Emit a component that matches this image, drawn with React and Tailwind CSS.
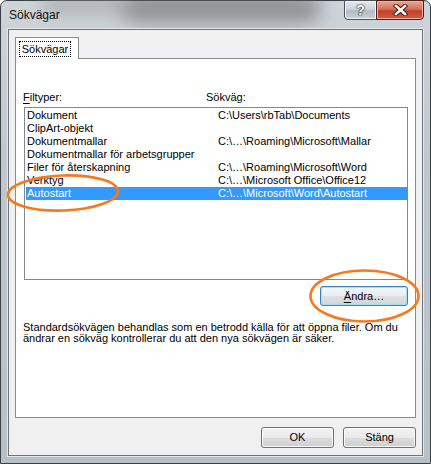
import React from "react";

const rows = [
  { type: "Dokument", path: "C:\\Users\\rbTab\\Documents" },
  { type: "ClipArt-objekt", path: "" },
  { type: "Dokumentmallar", path: "C:\\…\\Roaming\\Microsoft\\Mallar" },
  { type: "Dokumentmallar för arbetsgrupper", path: "" },
  { type: "Filer för återskapning", path: "C:\\…\\Roaming\\Microsoft\\Word" },
  { type: "Verktyg", path: "C:\\…\\Microsoft Office\\Office12" },
  { type: "Autostart", path: "C:\\…\\Microsoft\\Word\\Autostart", selected: true },
];

export default function App() {
  return (
    <div className="relative w-[431px] h-[464px] overflow-hidden bg-white font-['Liberation_Sans',Arial,sans-serif] text-[11px] text-black">
      <div className="relative flex h-full flex-col rounded-t-[7px] border border-[#3b4046] bg-[linear-gradient(180deg,#cfd4d9_0%,#c0c7ce_35%,#b7bfc7_100%)] px-[7px] pb-[7px]">
        {/* blurry glass behind the title */}
        <div className="pointer-events-none absolute left-[120px] top-[-8px] h-[30px] w-[200px] rounded-full bg-[#5f5f5f] opacity-55 blur-[9px]" />
        <div className="pointer-events-none absolute left-[40px] top-[-6px] h-[20px] w-[90px] rounded-full bg-[#8f8f8f] opacity-45 blur-[8px]" />

        <TitleBar />

        <div className="relative flex flex-1 flex-col border border-[#6e747a] bg-[#f0f0f0] px-[6px] pt-[7px] pb-[7px] shadow-[0_0_0_1px_#e4e8ec]">
          {/* tab strip */}
          <div className="relative z-10 -mb-px flex">
            <div className="flex h-[22px] w-[64px] items-start border border-b-0 border-[#898c95] bg-white px-[3px] pt-[3px]">
              <span className="flex h-[16px] w-[52px] items-center justify-center border border-dotted border-black leading-[13px]">
                Sökvägar
              </span>
            </div>
          </div>

          {/* tab panel */}
          <div className="flex flex-1 flex-col border border-[#898c95] bg-white">
            <div className="mt-[32px] flex pl-[7px] leading-[13px]">
              <span className="w-[183px]">
                <span className="underline underline-offset-[2px]">F</span>iltyper:
              </span>
              <span>Sökväg:</span>
            </div>

            <div className="ml-[8px] mr-[7px] mt-[3px] h-[173px] border border-[#828790] pt-[1px]">
              {rows.map((r) => (
                <div
                  key={r.type}
                  className={
                    "ml-[1px] grid h-[13px] grid-cols-[191px_1fr] pl-[1px] leading-[13px] whitespace-nowrap " +
                    (r.selected ? "bg-[#3399ff] text-white" : "")
                  }
                >
                  <span>{r.type}</span>
                  <span>{r.path}</span>
                </div>
              ))}
            </div>

            <div className="mr-[7px] mt-[6px] flex justify-end">
              <button className="h-[20px] w-[88px] rounded-[3px] border border-[#3c7fb1] bg-[linear-gradient(180deg,#f4f6f8_0%,#eaeef1_50%,#dce1e5_51%,#cfd5da_100%)] leading-[13px] shadow-[inset_0_0_0_1px_#a9dcf6]">
                <span className="underline underline-offset-[2px]">Ä</span>ndra…
              </button>
            </div>

            <p className="mt-[16px] pl-[7px] leading-[11px] whitespace-nowrap">
              Standardsökvägen behandlas som en betrodd källa för att öppna filer. Om du
              <br />
              ändrar en sökväg kontrollerar du att den nya sökvägen är säker.
            </p>
          </div>

          <div className="mt-[9px] flex justify-end gap-[9px]">
            <DlgButton>OK</DlgButton>
            <DlgButton>Stäng</DlgButton>
          </div>
        </div>
      </div>

      <Annotations />
    </div>
  );
}

function TitleBar() {
  return (
    <div className="relative flex h-[28px] items-start">
      <span className="ml-[1px] mt-[7px] text-[12px] leading-[15px] text-[#111]">Sökvägar</span>
      <div className="ml-auto -mr-[1px] -mt-px flex h-[20px]">
        <div className="flex w-[33px] items-center justify-center rounded-bl-[4px] border border-[#4b5157] bg-[linear-gradient(180deg,#e6eaee_0%,#ccd3da_45%,#b3bcc5_55%,#c9d0d7_100%)] shadow-[inset_0_0_0_1px_#f1f4f7]">
          <span className="text-[14px] font-bold leading-[14px] text-white [text-shadow:0_0_1px_#1a1a1a,0_0_1px_#1a1a1a,0_0_2px_#333]">?</span>
        </div>
        <div className="-ml-px flex w-[48px] items-center justify-center rounded-br-[4px] border border-[#4b1d14] bg-[linear-gradient(180deg,#e9a796_0%,#d6705a_45%,#c2422a_55%,#d35a3e_100%)] shadow-[inset_0_0_0_1px_#eeb3a4]">
          <svg width="15" height="12" viewBox="0 0 15 12">
            <path d="M3 2 L12 10 M12 2 L3 10" stroke="#3a1a14" strokeWidth="4.4" strokeLinecap="square" />
            <path d="M3 2 L12 10 M12 2 L3 10" stroke="#ffffff" strokeWidth="2.6" strokeLinecap="square" />
          </svg>
        </div>
      </div>
    </div>
  );
}

function DlgButton({ children }) {
  return (
    <button className="h-[21px] w-[73px] rounded-[3px] border border-[#707070] bg-[linear-gradient(180deg,#f2f2f2_0%,#ebebeb_50%,#dddddd_51%,#cfcfcf_100%)] leading-[13px] shadow-[inset_0_0_0_1px_#fcfcfc]">
      {children}
    </button>
  );
}

function Annotations() {
  return (
    <svg className="pointer-events-none absolute inset-0" width="431" height="464" viewBox="0 0 431 464">
      <ellipse cx="63" cy="193" rx="55" ry="17.5" fill="none" stroke="#f57a1f" strokeWidth="2.6" transform="rotate(-2 63 193)" />
      <ellipse cx="364.5" cy="296" rx="54" ry="25.5" fill="none" stroke="#f57a1f" strokeWidth="2.6" />
    </svg>
  );
}
